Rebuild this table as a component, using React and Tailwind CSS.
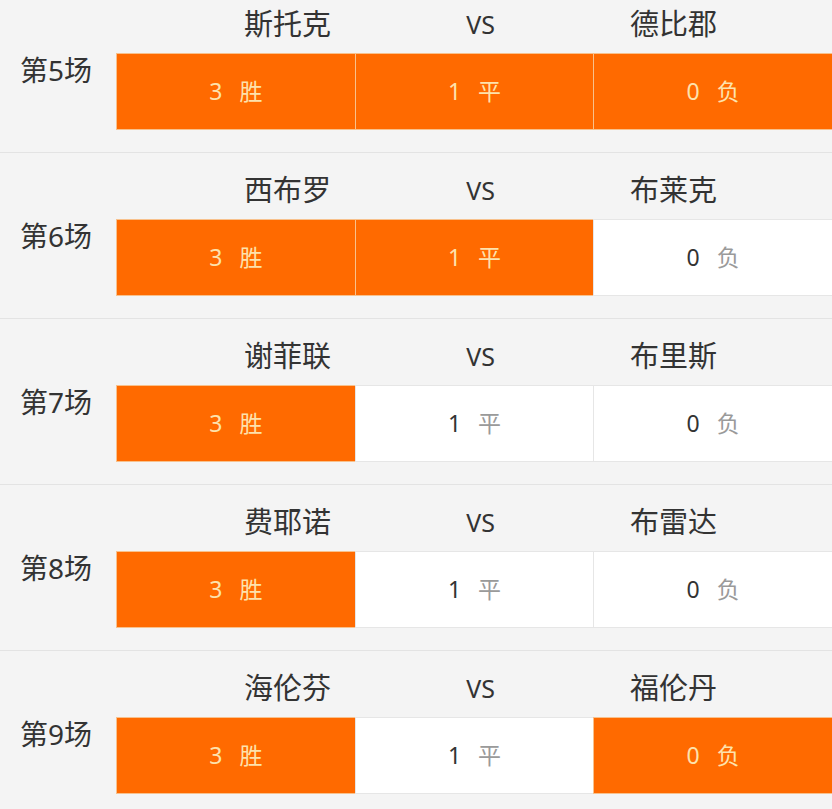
// Match result picker: five fixtures with 3/1/0 options.

const matches = [
  { no: 5, home: '斯托克', away: '德比郡', picks: [true, true, true] },
  { no: 6, home: '西布罗', away: '布莱克', picks: [true, true, false] },
  { no: 7, home: '谢菲联', away: '布里斯', picks: [true, false, false] },
  { no: 8, home: '费耶诺', away: '布雷达', picks: [true, false, false] },
  { no: 9, home: '海伦芬', away: '福伦丹', picks: [true, false, true] },
];

const options = [
  { num: '3', label: '胜' },
  { num: '1', label: '平' },
  { num: '0', label: '负' },
];

// Render one option cell.
function OptionCell({ num, label, active }) {
  return (
    <div
      className={[
        'flex-1 flex items-center justify-center gap-[17px] border-y border-l text-[23px]',
        active ? 'bg-[#ff6a00] border-[#f8c18c]' : 'bg-white border-[#e6e6e6]',
      ].join(' ')}
    >
      <span className={active ? 'text-[#fde2ad]' : 'text-[#333333]'}>{num}</span>
      <span className={active ? 'text-[#fde2ad]' : 'text-[#9a9a9a]'}>{label}</span>
    </div>
  );
}

// Render one match row.
function MatchRow({ match }) {
  return (
    <div className="flex h-[166px] border-t border-[#e3e3e3]">
      <div className="w-[116px] shrink-0 flex items-center pl-[20px] text-[28px] text-[#333333]">
        第{match.no}场
      </div>
      <div className="flex-1 flex flex-col">
        <div className="h-[66px] pt-[8px] flex items-center">
          <div className="ml-[75px] w-[579px] grid grid-cols-3 items-center text-center text-[#333333]">
            <span className="text-[29px] leading-[40px]">{match.home}</span>
            <span className="text-[25px] leading-[40px]">VS</span>
            <span className="text-[29px] leading-[40px]">{match.away}</span>
          </div>
        </div>
        <div className="h-[77px] flex">
          {options.map((o, i) =>
            <OptionCell key={o.num} num={o.num} label={o.label} active={match.picks[i]} />
          )}
        </div>
        <div className="h-[22px]" />
      </div>
    </div>
  );
}

export default function App() {
  return (
    <div
      className="w-[832px] h-[809px] overflow-hidden bg-[#f4f4f4]"
      style={{ fontFamily: '"Noto Sans", "Noto Sans CJK SC", sans-serif' }}
    >
      <div className="-mt-[14px]">
        {matches.map((m) =>
          <MatchRow key={m.no} match={m} />
        )}
      </div>
    </div>
  );
}
